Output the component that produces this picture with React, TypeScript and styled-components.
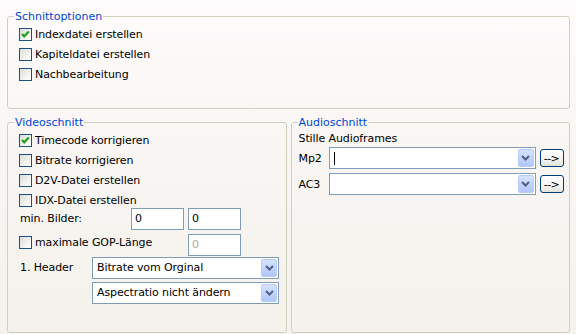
import styled, { createGlobalStyle } from 'styled-components';

const GlobalStyle = createGlobalStyle`
  html, body { margin: 0; padding: 0; }
  body {
    font-family: "DejaVu Sans", "Liberation Sans", sans-serif;
    font-size: 11px;
    letter-spacing: -0.1px;
    color: #000;
  }
`;

const Page = styled.div`
  width: 576px;
  height: 334px;
  box-sizing: border-box;
  padding: 10px 6px 0 7px;
  background: linear-gradient(#fefcfc, #f9f6f4 40%, #f4f2ec);
  display: flex;
  flex-direction: column;
  gap: 7px;
  overflow: hidden;
`;

const Group = styled.fieldset<{ $w: number; $h: number; $pad?: number }>`
  margin: 0;
  min-inline-size: 0;
  box-sizing: border-box;
  border: 1px solid #d0d0bf;
  border-radius: 3px;
  padding: 1px 8px 0 ${p => p.$pad ?? 11}px;
  width: ${p => p.$w}px;
  height: ${p => p.$h}px;
  display: flex;
  flex-direction: column;
`;

const Legend = styled.legend<{ $shift?: number }>`
  color: #0046d5;
  line-height: 13px;
  letter-spacing: 0;
  padding: 0 1px;
  margin-left: ${p => p.$shift ?? -5}px;
`;

const Columns = styled.div`
  display: flex;
  gap: 4px;
`;

const CheckRow = styled.label<{ $shift?: number }>`
  display: flex;
  align-items: center;
  height: 20px;
  gap: 3px;
  ${p => (p.$shift ? `margin-top: ${p.$shift}px;` : '')}
`;

const Box = styled.span`
  width: 13px;
  height: 13px;
  margin-top: 1px;
  box-sizing: border-box;
  flex: none;
  border: 1px solid #1c5180;
  background: linear-gradient(135deg, #dcdcd7, #f6f6f4 70%, #fff);
  display: flex;
`;

const NumberGrid = styled.div`
  display: grid;
  grid-template-columns: 108px 53px 53px;
  grid-auto-rows: 22px;
  column-gap: 4px;
  row-gap: 4px;
  margin-top: -2px;
`;

const WideCell = styled.div`
  grid-column: 1 / span 2;
  margin-top: -2px;
`;

const Label = styled.span<{ $w?: number }>`
  ${p => (p.$w ? `width: ${p.$w}px;` : '')}
  flex: none;
  padding-left: 1px;
  line-height: 22px;
`;

const TextBox = styled.div<{ $disabled?: boolean }>`
  height: 22px;
  box-sizing: border-box;
  border: 1px solid #7f9db9;
  background: #fff;
  padding-left: 3px;
  line-height: 20px;
  color: ${p => (p.$disabled ? '#aca899' : '#000')};
`;

const HeaderRow = styled.div`
  display: flex;
  align-items: flex-start;
  margin-top: 1px;
`;

const Combo = styled.div<{ $w: number }>`
  width: ${p => p.$w}px;
  height: 22px;
  box-sizing: border-box;
  border: 1px solid #7f9db9;
  background: #fff;
  display: flex;
  align-items: stretch;
  padding: 1px;
  flex: none;
`;

const ComboText = styled.span`
  flex: 1;
  padding-left: 3px;
  line-height: 18px;
  display: flex;
  align-items: center;
`;

const Caret = styled.span`
  width: 1px;
  height: 13px;
  background: #000;
`;

const DropButton = styled.span`
  width: 16px;
  flex: none;
  box-sizing: border-box;
  border: 1px solid #b9cbf6;
  border-radius: 2px;
  background: linear-gradient(#d6e2fe, #c3d4fc 50%, #b0c6f8);
  display: flex;
  align-items: center;
  justify-content: center;
`;

const Stack = styled.div`
  display: flex;
  flex-direction: column;
  gap: 3px;
`;

const AudioLine = styled.div`
  line-height: 13px;
  margin-top: 2px;
`;

const AudioRow = styled.div<{ $top: number }>`
  display: flex;
  align-items: center;
  margin-top: ${p => p.$top}px;
`;

const AudioLabel = styled.span`
  width: 30px;
  flex: none;
`;

const SmallButton = styled.button`
  margin: 0 0 0 4px;
  width: 24px;
  height: 18px;
  flex: none;
  padding: 0;
  box-sizing: border-box;
  border: 1px solid #003c74;
  border-radius: 3px;
  background: linear-gradient(#fff, #f4f4f0 60%, #e3e2da);
  font: inherit;
  font-size: 11px;
  line-height: 15px;
  color: #000;
  letter-spacing: -0.5px;
`;

const Check = ({ checked }: { checked?: boolean }) => (
  <Box>
    {checked && (
      <svg width={11} height={11} viewBox="0 0 11 11">
        <polyline points="2,5 4.2,7.3 8.8,2.6" fill="none" stroke="#21a121" strokeWidth={2.2} />
      </svg>
    )}
  </Box>
);

const CheckItem = ({ text, checked }: { text: string; checked?: boolean }) => (
  <CheckRow>
    <Check checked={checked} />
    <span>{text}</span>
  </CheckRow>
);

const Dropdown = ({ w, text, caret }: { w: number; text?: string; caret?: boolean }) => (
  <Combo $w={w}>
    <ComboText>{caret ? <Caret /> : text}</ComboText>
    <DropButton>
      <svg width={9} height={6} viewBox="0 0 9 6">
        <polyline points="1,1 4.5,4.5 8,1" fill="none" stroke="#4d6185" strokeWidth={2} />
      </svg>
    </DropButton>
  </Combo>
);

const App = () => (
  <>
    <GlobalStyle />
    <Page>
      <Group $w={563} $h={99}>
        <Legend>Schnittoptionen</Legend>
        <CheckItem text="Indexdatei erstellen" checked />
        <CheckItem text="Kapiteldatei erstellen" />
        <CheckItem text="Nachbearbeitung" />
      </Group>

      <Columns>
        <Group $w={280} $h={217}>
          <Legend>Videoschnitt</Legend>
          <CheckItem text="Timecode korrigieren" checked />
          <CheckItem text="Bitrate korrigieren" />
          <CheckItem text="D2V-Datei erstellen" />
          <CheckItem text="IDX-Datei erstellen" />
          <NumberGrid>
            <Label>min. Bilder:</Label>
            <TextBox>0</TextBox>
            <TextBox>0</TextBox>
            <WideCell>
              <CheckItem text="maximale GOP-Länge" />
            </WideCell>
            <TextBox $disabled>0</TextBox>
          </NumberGrid>
          <HeaderRow>
            <Label $w={72}>1. Header</Label>
            <Stack>
              <Dropdown w={187} text="Bitrate vom Orginal" />
              <Dropdown w={187} text="Aspectratio nicht ändern" />
            </Stack>
          </HeaderRow>
        </Group>

        <Group $w={280} $h={217} $pad={7}>
          <Legend $shift={-1}>Audioschnitt</Legend>
          <AudioLine>Stille Audioframes</AudioLine>
          <AudioRow $top={2}>
            <AudioLabel>Mp2</AudioLabel>
            <Dropdown w={207} caret />
            <SmallButton>--&gt;</SmallButton>
          </AudioRow>
          <AudioRow $top={4}>
            <AudioLabel>AC3</AudioLabel>
            <Dropdown w={207} />
            <SmallButton>--&gt;</SmallButton>
          </AudioRow>
        </Group>
      </Columns>
    </Page>
  </>
);

export default App;
